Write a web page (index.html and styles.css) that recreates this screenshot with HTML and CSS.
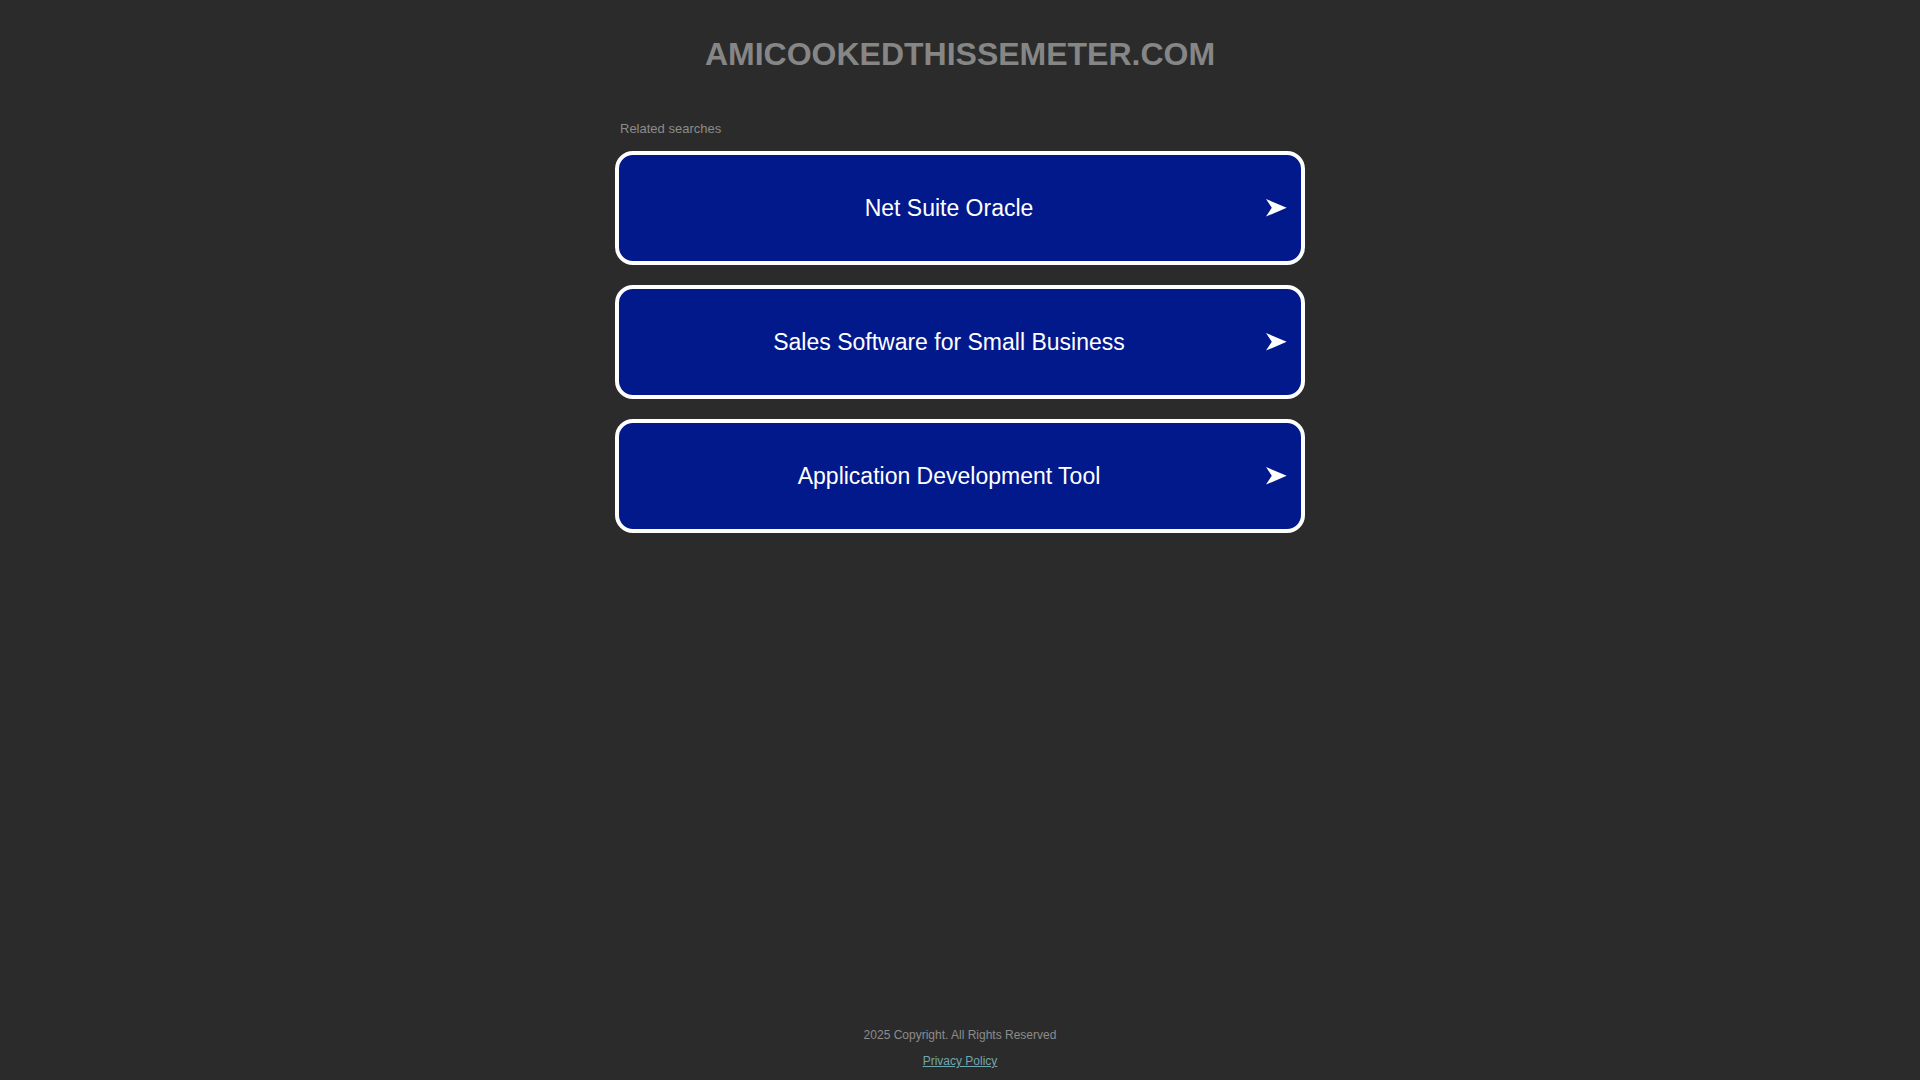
FILE: index.html
```html
<!DOCTYPE html>
<html lang="en">
<head>
<meta charset="utf-8">
<title>amicookedthissemeter.com</title>
<link rel="stylesheet" href="styles.css">
</head>
<body>
  <header class="header">
    <h1 class="domain">AMICOOKEDTHISSEMETER.COM</h1>
  </header>
  <main class="content">
    <div class="related">Related searches</div>
    <ul class="links">
      <li><a class="link" href="#"><span class="link-text">Net Suite Oracle</span><span class="arrow"><svg width="21" height="18" viewBox="0 0 21 18"><path d="M0 0 L20.7 8.8 L0 17.6 L5.8 8.8 Z" fill="#fff"/></svg></span></a></li>
      <li><a class="link" href="#"><span class="link-text">Sales Software for Small Business</span><span class="arrow"><svg width="21" height="18" viewBox="0 0 21 18"><path d="M0 0 L20.7 8.8 L0 17.6 L5.8 8.8 Z" fill="#fff"/></svg></span></a></li>
      <li><a class="link" href="#"><span class="link-text">Application Development Tool</span><span class="arrow"><svg width="21" height="18" viewBox="0 0 21 18"><path d="M0 0 L20.7 8.8 L0 17.6 L5.8 8.8 Z" fill="#fff"/></svg></span></a></li>
    </ul>
  </main>
  <footer class="footer">
    <p class="copyright">2025 Copyright. All Rights Reserved</p>
    <p class="privacy"><a href="#">Privacy Policy</a></p>
  </footer>
</body>
</html>
```

FILE: styles.css
```css
html, body {
  margin: 0;
  padding: 0;
}

body {
  background: #2b2b2b;
  font-family: "Liberation Sans", Arial, sans-serif;
  min-height: 100vh;
  display: flex;
  flex-direction: column;
}

.header {
  padding-top: 36px;
}

.domain {
  margin: 0;
  font-size: 32px;
  line-height: 37px;
  font-weight: bold;
  color: #868686;
  text-align: center;
}

.content {
  width: 690px;
  margin: 0 auto;
  padding-top: 48px;
}

.related {
  font-size: 13px;
  line-height: 15px;
  color: #8c8c8c;
  padding-left: 5px;
  margin-bottom: 15px;
}

.links {
  list-style: none;
  margin: 0;
  padding: 0;
  display: flex;
  flex-direction: column;
  gap: 20px;
}

.link {
  display: flex;
  align-items: center;
  box-sizing: border-box;
  height: 114px;
  padding: 0 14px 0 15px;
  background: #02198b;
  border: 4px solid #ffffff;
  border-radius: 18px;
  color: #ffffff;
  text-decoration: none;
}

.link-text {
  flex: 1;
  text-align: center;
  font-size: 23px;
  line-height: 27px;
}

.arrow {
  width: 23px;
  display: flex;
  justify-content: flex-end;
  align-items: center;
}

.arrow svg {
  display: block;
}

.footer {
  margin-top: auto;
  padding-bottom: 12px;
  text-align: center;
  font-size: 12px;
  line-height: 14px;
}

.copyright {
  margin: 0;
  color: #8c8c8c;
}

.privacy {
  margin: 12px 0 0;
}

.privacy a {
  color: #6fa8ae;
  text-decoration: underline;
}
```
